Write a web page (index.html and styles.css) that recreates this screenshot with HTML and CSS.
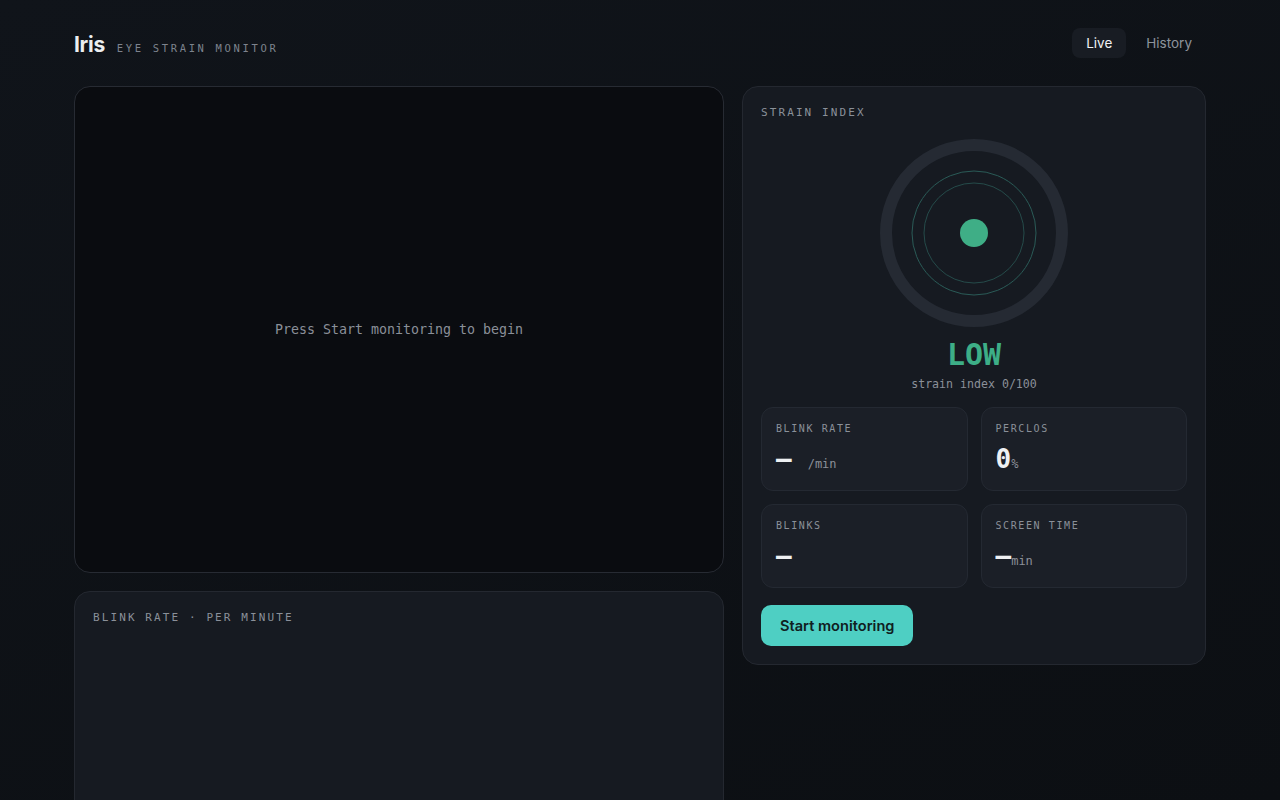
FILE: index.html
```html
<!doctype html>
<html lang="en">
<head>
    <meta charset="UTF-8">
    <meta name="viewport" content="width=device-width, initial-scale=1.0">
    <title>Iris</title>
    <link rel="stylesheet" href="styles.css">
</head>
<body>
<div class="page">
    <header class="topbar">
        <div class="brand">
            <span class="brand-name">Iris</span>
            <span class="brand-sub">EYE STRAIN MONITOR</span>
        </div>
        <nav class="tabs">
            <a class="tab active">Live</a>
            <a class="tab">History</a>
        </nav>
    </header>

    <main class="grid">
        <div class="left">
            <section class="video">
                <p class="video-hint">Press Start monitoring to begin</p>
            </section>
            <section class="panel chart">
                <h2 class="label">BLINK RATE · PER MINUTE</h2>
            </section>
        </div>

        <section class="panel strain">
            <h2 class="label">STRAIN INDEX</h2>

            <div class="gauge">
                <svg width="190" height="190" viewBox="0 0 190 190">
                    <circle cx="95" cy="95" r="88" fill="none" stroke="#252a33" stroke-width="12"/>
                    <circle cx="95" cy="95" r="62" fill="none" stroke="#2a5b57" stroke-width="1"/>
                    <circle cx="95" cy="95" r="50" fill="none" stroke="#254b4a" stroke-width="1"/>
                    <circle cx="95" cy="95" r="14" fill="#3fae86"/>
                </svg>
            </div>

            <div class="level">LOW</div>
            <div class="level-sub">strain index 0/100</div>

            <div class="stats">
                <div class="stat">
                    <div class="stat-label">BLINK RATE</div>
                    <div class="stat-value">—<span class="unit spaced">/min</span></div>
                </div>
                <div class="stat">
                    <div class="stat-label">PERCLOS</div>
                    <div class="stat-value">0<span class="unit">%</span></div>
                </div>
                <div class="stat">
                    <div class="stat-label">BLINKS</div>
                    <div class="stat-value">—</div>
                </div>
                <div class="stat">
                    <div class="stat-label">SCREEN TIME</div>
                    <div class="stat-value">—<span class="unit">min</span></div>
                </div>
            </div>

            <button class="start">Start monitoring</button>
        </section>
    </main>
</div>
</body>
</html>
```

FILE: styles.css
```css
* {
    box-sizing: border-box;
}

html, body {
    margin: 0;
    height: 100%;
}

body {
    background: linear-gradient(160deg, #10141a 0%, #0c0f13 100%);
    color: #e6e8eb;
    font-family: Inter, "Noto Sans", sans-serif;
    overflow: hidden;
}

.page {
    width: 1132px;
    margin: 0 auto;
    padding-top: 28px;
}

.topbar {
    display: flex;
    justify-content: space-between;
    align-items: center;
    height: 30px;
    margin-bottom: 28px;
}

.brand {
    display: flex;
    align-items: baseline;
    gap: 12px;
    padding-top: 2px;
}

.brand-name {
    font-size: 21px;
    font-weight: 700;
    color: #eceef0;
    letter-spacing: -0.3px;
}

.brand-sub {
    font-family: "DejaVu Sans Mono", monospace;
    font-size: 10.5px;
    letter-spacing: 2.65px;
    color: #7d838d;
}

.tabs {
    display: flex;
    gap: 6px;
}

.tab {
    font-size: 13.5px;
    color: #8d939c;
    padding: 7px 14px;
    border-radius: 8px;
    line-height: 16px;
}

.tab.active {
    background: #181c23;
    color: #f0f2f4;
    padding: 7px 14px;
}

.grid {
    display: grid;
    grid-template-columns: 650px 464px;
    gap: 18px;
    align-items: start;
}

.left {
    display: flex;
    flex-direction: column;
    gap: 18px;
}

.video {
    height: 487px;
    border: 1px solid #272b33;
    border-radius: 16px;
    background: #0a0c10;
    display: flex;
    align-items: center;
    justify-content: center;
}

.video-hint {
    margin: 0;
    font-family: "DejaVu Sans Mono", monospace;
    font-size: 13.3px;
    color: #8b9099;
}

.panel {
    background: #161a21;
    border: 1px solid #242830;
    border-radius: 16px;
    padding: 19px 18px;
}

.chart {
    height: 260px;
}

.label {
    margin: 0;
    font-family: "DejaVu Sans Mono", monospace;
    font-weight: 400;
    font-size: 11px;
    letter-spacing: 2.1px;
    color: #8a9099;
    line-height: 14px;
}

.strain {
    padding: 19px 18px 18px;
}

.gauge {
    display: flex;
    justify-content: center;
    margin-top: 18px;
}

.gauge svg {
    display: block;
}

.level {
    text-align: center;
    font-family: "DejaVu Sans Mono", monospace;
    font-weight: 700;
    font-size: 30px;
    color: #3dae87;
    margin-top: 10px;
    line-height: 34px;
}

.level-sub {
    text-align: center;
    font-family: "DejaVu Sans Mono", monospace;
    font-size: 11.6px;
    color: #8b9099;
    margin-top: 4px;
    line-height: 16px;
}

.stats {
    display: grid;
    grid-template-columns: 1fr 1fr;
    gap: 13px;
    margin-top: 15px;
}

.stat {
    height: 84px;
    background: #1b1f27;
    border: 1px solid #242932;
    border-radius: 12px;
    padding: 15px 14px;
}

.stat-label {
    font-family: "DejaVu Sans Mono", monospace;
    font-size: 10px;
    letter-spacing: 1.6px;
    color: #8a9099;
    line-height: 12px;
}

.stat-value {
    font-family: "DejaVu Sans Mono", monospace;
    font-weight: 700;
    font-size: 26px;
    color: #eef0f2;
    margin-top: 9px;
    line-height: 30px;
}

.unit {
    font-size: 12px;
    font-weight: 400;
    color: #8b9099;
    letter-spacing: 0;
}

.unit.spaced {
    margin-left: 16px;
}

.start {
    margin-top: 17px;
    background: #4ecfc3;
    color: #10201f;
    border: 0;
    border-radius: 10px;
    font-family: Inter, "Noto Sans", sans-serif;
    font-weight: 600;
    font-size: 14.6px;
    height: 41px;
    padding: 0 19px;
    cursor: pointer;
}
```
